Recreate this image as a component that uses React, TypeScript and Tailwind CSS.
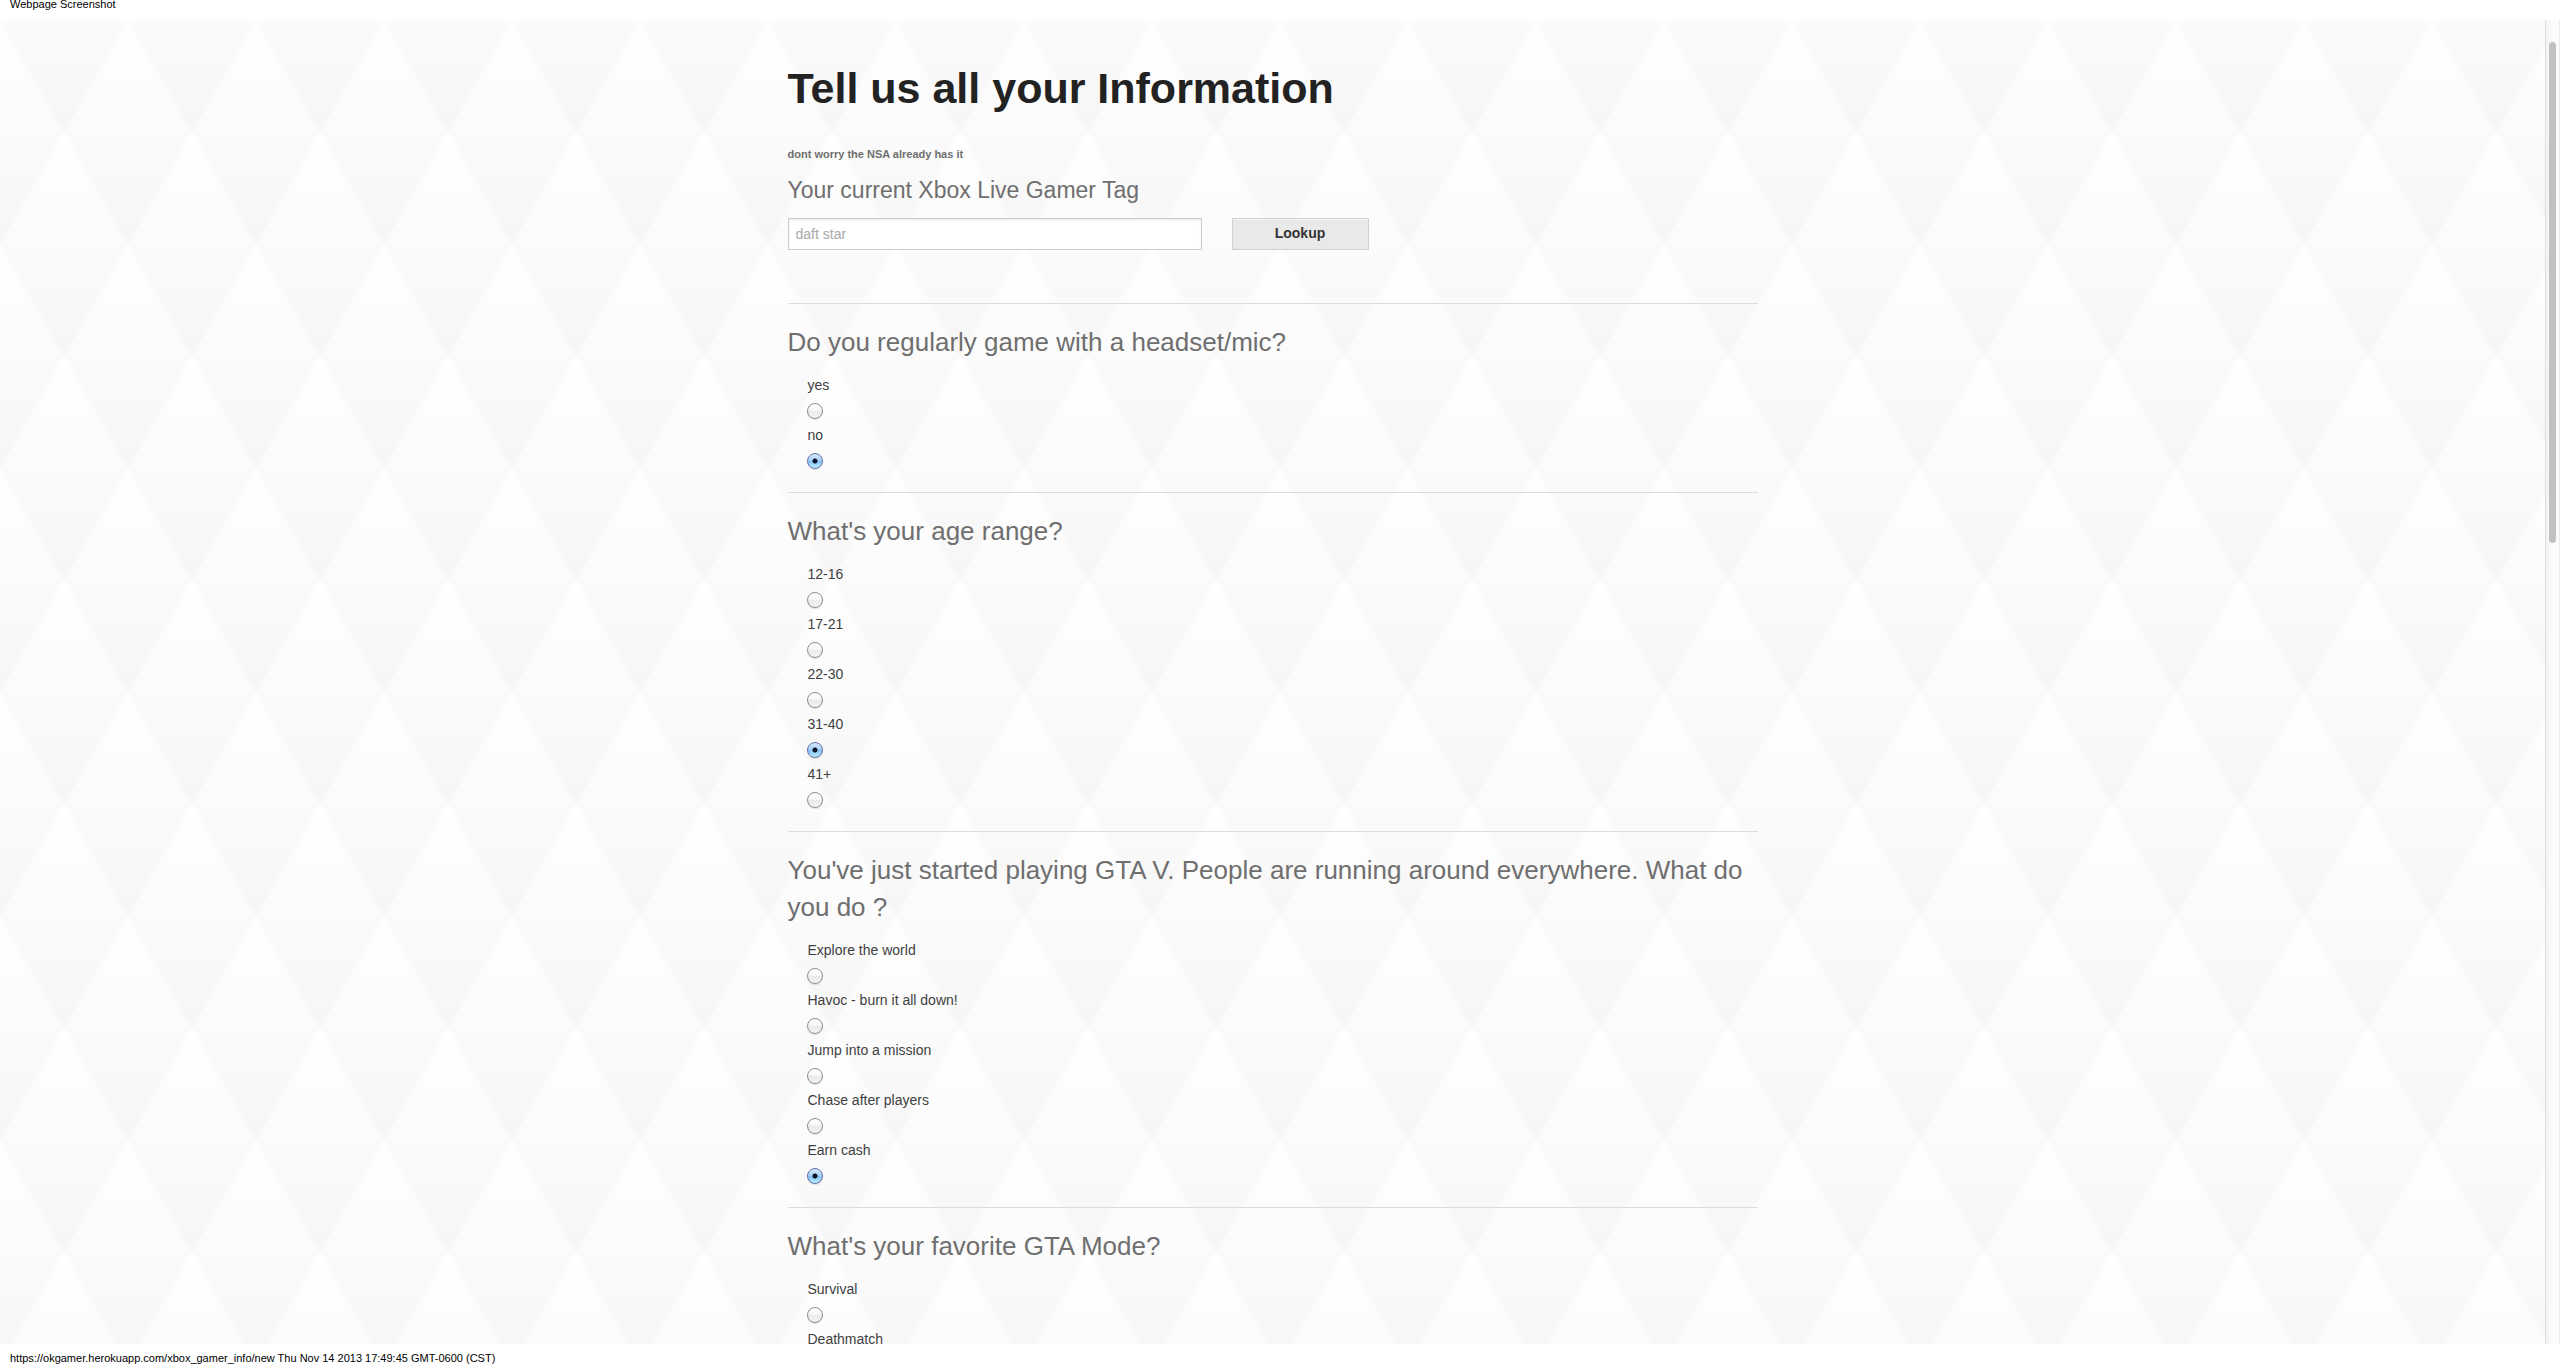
type Question = {
  name: string;
  title: string;
  options: string[];
  selected?: string;
};

const questions: Question[] = [
  {
    name: "headset",
    title: "Do you regularly game with a headset/mic?",
    options: ["yes", "no"],
    selected: "no",
  },
  {
    name: "age",
    title: "What's your age range?",
    options: ["12-16", "17-21", "22-30", "31-40", "41+"],
    selected: "31-40",
  },
  {
    name: "playstyle",
    title:
      "You've just started playing GTA V. People are running around everywhere. What do you do ?",
    options: [
      "Explore the world",
      "Havoc - burn it all down!",
      "Jump into a mission",
      "Chase after players",
      "Earn cash",
    ],
    selected: "Earn cash",
  },
  {
    name: "mode",
    title: "What's your favorite GTA Mode?",
    options: ["Survival", "Deathmatch"],
  },
];

function DiamondBackdrop() {
  return (
    <svg className="absolute inset-0 h-full w-full" aria-hidden="true">
      <defs>
        <linearGradient id="shade" x1="0" y1="0" x2="0" y2="1">
          <stop offset="0" stopColor="#ffffff" />
          <stop offset="0.5" stopColor="#fbfbfb" />
          <stop offset="1" stopColor="#f6f6f6" />
        </linearGradient>
        <pattern id="diamonds" width="128" height="224" patternUnits="userSpaceOnUse">
          <rect width="128" height="224" fill="#fbfbfb" />
          <path d="M0 0L64 112L0 224L-64 112Z" fill="url(#shade)" />
          <path d="M128 0L192 112L128 224L64 112Z" fill="url(#shade)" />
          <path d="M64 -112L128 0L64 112L0 0Z" fill="url(#shade)" />
          <path d="M64 112L128 224L64 336L0 224Z" fill="url(#shade)" />
        </pattern>
      </defs>
      <rect width="100%" height="100%" fill="url(#diamonds)" />
    </svg>
  );
}

function RadioOption({ name, label, checked }: { name: string; label: string; checked: boolean }) {
  const id = `${name}-${label.toLowerCase().replace(/[^a-z0-9]+/g, "-")}`;
  return (
    <div className="flex flex-col items-start pb-1.5">
      <label htmlFor={id} className="pl-px text-sm leading-[21px] text-[#404040]">
        {label}
      </label>
      <input
        id={id}
        type="radio"
        name={name}
        defaultChecked={checked}
        className="mt-[7px] size-4 appearance-none rounded-full border border-[#8e8e8e] bg-[linear-gradient(#ffffff,#f6f6f6_48%,#e9e9e9_52%,#f4f4f4)] shadow-[0_1px_1px_rgba(0,0,0,0.12)] checked:border-[#6470a8] checked:bg-[radial-gradient(circle,#0a1428_2px,transparent_3px),linear-gradient(#d8ebfb,#a3cff7_48%,#84c0f6_52%,#b9ecff)]"
      />
    </div>
  );
}

function QuestionSection({ question }: { question: Question }) {
  return (
    <fieldset className="border-t border-[#dddddd] pt-5 pb-[17px]">
      <legend className="contents">
        <span className="block text-[26px] leading-[37px] text-[#6f6f6f]">{question.title}</span>
      </legend>
      <div className="pt-3.5 pl-[19px]">
        {question.options.map((option) => (
          <RadioOption
            key={option}
            name={question.name}
            label={option}
            checked={option === question.selected}
          />
        ))}
      </div>
    </fieldset>
  );
}

export default function App() {
  return (
    <div className="flex h-screen flex-col overflow-hidden bg-white font-['Liberation_Sans',Arial,sans-serif]">
      <header className="h-5 shrink-0 px-2.5 text-[11px] leading-[8px] text-black">
        Webpage Screenshot
      </header>

      <div className="flex min-h-0 flex-1">
        <main className="relative min-w-0 flex-1 overflow-hidden">
          <DiamondBackdrop />
          <form className="relative mx-auto w-full max-w-[970px] pt-[37px]">
            <h1 className="text-[43px] leading-[62px] font-bold text-[#222222]">
              Tell us all your Information
            </h1>
            <p className="mt-7 text-[11px] leading-[15px] font-bold text-[#6f6f6f]">
              dont worry the NSA already has it
            </p>
            <label
              htmlFor="gamertag"
              className="mt-[11px] block text-[23px] leading-[34px] text-[#6f6f6f]"
            >
              Your current Xbox Live Gamer Tag
            </label>
            <div className="mt-[11px] mb-[53px] flex gap-[30px]">
              <input
                id="gamertag"
                type="text"
                placeholder="daft star"
                className="h-8 w-[414px] border border-[#cccccc] bg-white px-[7px] text-sm text-[#4d4d4d] shadow-[inset_0_1px_2px_rgba(0,0,0,0.1)] placeholder:text-[#a9a9a9]"
              />
              <button
                type="button"
                className="h-8 w-[137px] border border-[#d0d0d0] bg-[#e9e9e9] pb-0.5 text-sm font-bold text-[#333333] shadow-[inset_0_1px_0_rgba(255,255,255,0.5)]"
              >
                Lookup
              </button>
            </div>
            {questions.map((question) => (
              <QuestionSection key={question.name} question={question} />
            ))}
          </form>
        </main>

        <div
          className="w-[15px] shrink-0 border-x border-l-[#dedede] border-r-[#ececec] bg-linear-to-r from-[#f2f2f2] to-[#fcfcfc] to-50% px-[3px] pt-[22px]"
          aria-hidden="true"
        >
          <div className="h-5/13 rounded-full bg-[#c1c1c1]" />
        </div>
      </div>

      <footer className="h-5 shrink-0 px-2.5 pt-2 text-[11px] leading-3 text-black">
        https://okgamer.herokuapp.com/xbox_gamer_info/new Thu Nov 14 2013 17:49:45 GMT-0600 (CST)
      </footer>
    </div>
  );
}
